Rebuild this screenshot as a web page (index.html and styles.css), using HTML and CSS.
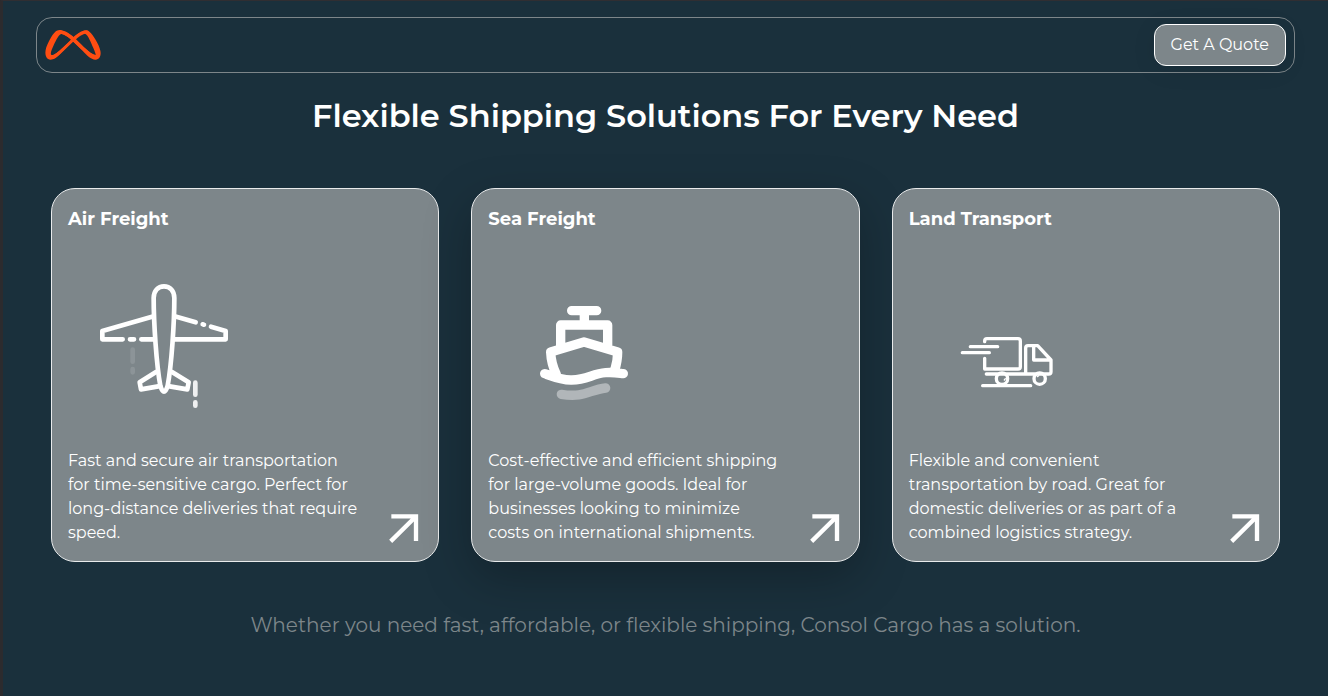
FILE: index.html
```html
<!DOCTYPE html>
<html lang="en">
<head>
<meta charset="utf-8">
<meta name="viewport" content="width=device-width, initial-scale=1">
<title>Consol Cargo</title>
<link rel="stylesheet" href="styles.css">
</head>
<body>
<div class="page">
  <header class="navbar">
    <a class="logo" href="#" aria-label="Consol Cargo home">
      <svg viewBox="135 90 168 91" fill="none" stroke="currentColor" stroke-linejoin="round" stroke-linecap="round" aria-hidden="true">
        <path stroke-width="9" d="M180 96C204 98 225 124 244 142C262 159 278 171 290 170M260 96C241 97 219 119 197 141C180 158 164 174 150 173"/>
        <path fill="currentColor" stroke="none" d="M185 91C168 86 158 102 146 124C136 143 132 160 138 172C142 180 150 182 158 179C171 175 181 160 217 124L213 120C183 149 165 166 154 166C148 163 155 148 161 135C169 118 177 101 185 102C196 104 206 112 218 124L249 154C262 168 274 181 288 180C300 179 305 167 302 153C298 133 281 106 269 95C264 90 257 90 250 92C240 95 229 103 217 114L222 118C234 108 248 99 257 102C264 105 273 127 281 145C288 162 290 168 285 167C274 163 256 146 239 129C218 108 203 95 185 91Z"/>
      </svg>
    </a>
    <button class="quote" type="button">Get A Quote</button>
  </header>

  <main class="content">
    <h1 class="title">Flexible Shipping Solutions For Every Need</h1>
    <div class="cards">
      <article class="card">
        <h2 class="card-title">Air Freight</h2>
        <svg class="picture" viewBox="-66 -63 576 576" fill="none" stroke="currentColor" stroke-width="14" stroke-linecap="round" stroke-linejoin="round" aria-hidden="true">
          <path d="M222 49C204 49 191 63 191 84C191 156 199 283 211 347Q216 365 222 365Q228 365 233 347C245 283 253 156 253 84C253 63 240 49 222 49Z"/>
          <path d="M186 140L37 183V208H98M120 208H132M154 208H194M259 140L317 157M338 163L342 164M363 170L407 183V208H252M198 306L149 337L153 358L205 349M246 306L296 337L292 358L239 349"/>
          <path opacity=".88" d="M316 338V374M316 397V407"/>
          <path opacity=".12" d="M128 239V275M128 297V307"/>
        </svg>
        <div class="card-foot">
          <p class="text">Fast and secure air transportation for&nbsp;time-sensitive cargo. Perfect for long-distance deliveries that require speed.</p>
          <a class="more" href="#" aria-label="More about air freight"><svg viewBox="48 87 108 108" fill="none" stroke="currentColor" stroke-width="13" aria-hidden="true"><path d="M64 109H138V183M62 184L136 111"/></svg></a>
        </div>
      </article>

      <article class="card raised">
        <h2 class="card-title">Sea Freight</h2>
        <svg class="picture" viewBox="-96 -123 576 576" fill="none" stroke="currentColor" stroke-width="28" stroke-linecap="round" stroke-linejoin="round" aria-hidden="true">
          <path d="M155 62H230M193 62V103M122 171V105H263V171M109 253C98 231 93 210 92 186L192 156L293 186C293 207 289 225 284 242M74 251C102 261 127 271 155 270C202 270 216 251 257 248C280 246 294 249 310 251"/>
          <path opacity=".4" d="M124 313C193 324 207 300 257 294"/>
        </svg>
        <div class="card-foot">
          <p class="text">Cost-effective and efficient shipping for large-volume goods. Ideal for businesses looking to minimize costs on international shipments.</p>
          <a class="more" href="#" aria-label="More about sea freight"><svg viewBox="48 87 108 108" fill="none" stroke="currentColor" stroke-width="13" aria-hidden="true"><path d="M64 109H138V183M62 184L136 111"/></svg></a>
        </div>
      </article>

      <article class="card">
        <h2 class="card-title">Land Transport</h2>
        <svg class="picture" viewBox="-93 -183 576 576" fill="none" stroke="currentColor" stroke-width="10" stroke-linecap="round" stroke-linejoin="round" aria-hidden="true">
          <path d="M134 95V93Q134 86 141 86H234Q241 86 241 93V170Q241 177 234 177H134V145M91 110H173M67 128H148M139 192H326Q333 192 333 185V150L293 107H264Q257 107 257 114V188M281 109V150H331M128 227H272"/>
          <circle cx="186" cy="206" r="17"/>
          <circle cx="299" cy="206" r="17"/>
          <path stroke-width="4" d="M193 210L196 206M292 200L296 197"/>
        </svg>
        <div class="card-foot">
          <p class="text">Flexible and convenient transportation by road. Great for domestic deliveries or as part of a combined logistics strategy.</p>
          <a class="more" href="#" aria-label="More about land transport"><svg viewBox="48 87 108 108" fill="none" stroke="currentColor" stroke-width="13" aria-hidden="true"><path d="M64 109H138V183M62 184L136 111"/></svg></a>
        </div>
      </article>
    </div>
    <p class="summary">Whether you need fast, affordable, or flexible shipping, Consol Cargo has a solution.</p>
  </main>
</div>
</body>
</html>
```
FILE: styles.css
```css
* { box-sizing: border-box; }

body {
  margin: 0;
  background: #1a303c;
  color: #fff;
  font-family: Montserrat, Inter, "Open Sans", sans-serif;
}

h1, h2, p { margin: 0; }

.page {
  min-height: 100vh;
  padding: 16px 33px;
  border-top: 1px solid #302e32;
  border-left: 3px solid #2c2b2e;
}

.navbar {
  display: flex;
  align-items: center;
  justify-content: space-between;
  height: 56px;
  padding: 0 8px;
  border: 1px solid #7d868a;
  border-radius: 16px;
}

.logo { display: flex; color: #ff4d12; }
.logo svg { width: 56px; height: 30px; }

.quote {
  height: 42px;
  padding: 0 16px;
  border: 1px solid #fff;
  border-radius: 12px;
  background: #7d868a;
  color: #fff;
  font: 400 16px/24px Montserrat, Inter, sans-serif;
  box-shadow: 0 4px 24px rgba(0, 0, 0, .08);
}

.content { padding: 23px 15px 0; }

.title {
  text-align: center;
  font-size: 32px;
  line-height: 40px;
  font-weight: 600;
}

.cards {
  display: grid;
  grid-template-columns: repeat(3, 1fr);
  gap: 32px;
  margin-top: 52px;
}

.card {
  display: flex;
  flex-direction: column;
  padding: 16px;
  border: 1px solid #e8eaeb;
  border-radius: 24px;
  background: #7d868a;
}

.raised { box-shadow: 0 16px 48px rgba(0, 0, 0, .25); }

.card-title {
  font-size: 18px;
  line-height: 28px;
  font-weight: 700;
}

.picture {
  width: 192px;
  height: 192px;
  margin: 16px 0 8px;
}

.card-foot {
  display: flex;
  align-items: flex-end;
  justify-content: space-between;
  flex: 1;
}

.text {
  max-width: 292px;
  font-size: 16px;
  line-height: 24px;
  font-weight: 400;
}

.more { display: flex; color: #fff; }
.more svg { width: 36px; height: 36px; }

.summary {
  margin-top: 49px;
  text-align: center;
  color: #7d868a;
  font-size: 20px;
  line-height: 28px;
  font-weight: 400;
}
```
